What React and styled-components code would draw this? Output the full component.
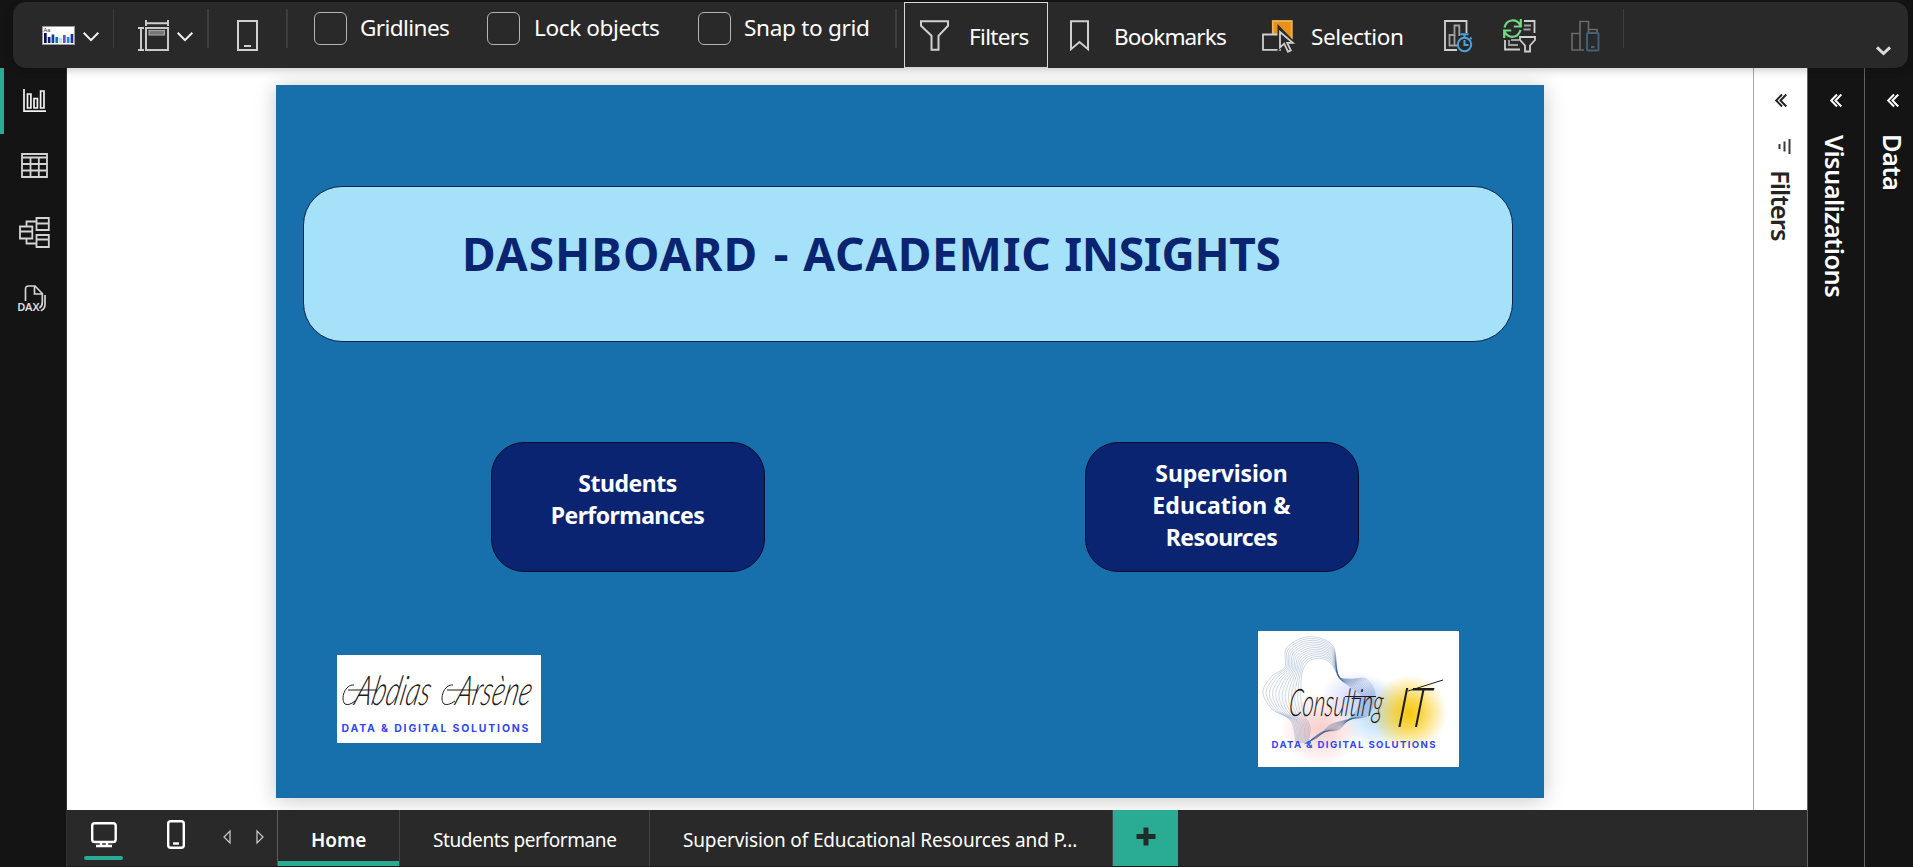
import React from 'react';
import styled, { createGlobalStyle } from 'styled-components';

const c = {
  bg: '#141414',
  bar: '#292929',
  teal: '#2aac94',
  line: '#d0d0d0',
  page: '#1770ac',
  navy: '#0a2472',
  sky: '#a6e1fa',
};

const Global = createGlobalStyle`
  * { box-sizing: border-box; }
  body { margin: 0; background: ${c.bg}; overflow: hidden; }
  svg { display: block; flex: none; overflow: visible; }
`;

const Shell = styled.div`
  display: flex;
  flex-direction: column;
  width: 1913px;
  height: 867px;
  background: ${c.bg};
  font-family: 'Noto Sans', 'Open Sans', sans-serif;
  color: #fff;
`;

/* ---------- ribbon ---------- */

const Ribbon = styled.header`
  display: flex;
  align-items: flex-start;
  flex: none;
  height: 66px;
  margin: 2px 5px 0 13px;
  background: ${c.bar};
  border-radius: 13px;
  box-shadow: 0 2px 9px rgba(0, 0, 0, 0.22);
  position: relative;
  z-index: 1;
`;

const Tool = styled.div`
  display: flex;
  flex: none;
  width: ${(p) => p.$w}px;
  margin: ${(p) => p.$top ?? 18}px 0 0 ${(p) => p.$gap}px;
`;

const Divider = styled.div`
  flex: none;
  width: ${(p) => p.$w ?? 2}px;
  height: 39px;
  margin: 7px 0 0 ${(p) => p.$gap}px;
  background: #3d3d3d;
`;

const Checkbox = styled.span`
  flex: none;
  width: 33px;
  height: 33px;
  margin: 10px 0 0 ${(p) => p.$gap}px;
  border: 1px solid #b4b4b4;
  border-radius: 6px;
`;

const ToolLabel = styled.span`
  flex: none;
  width: ${(p) => p.$w}px;
  margin: ${(p) => p.$top ?? 11}px 0 0 ${(p) => p.$gap}px;
  font-size: 22.6px;
  line-height: 30px;
  letter-spacing: ${(p) => p.$ls}px;
  white-space: nowrap;
`;

const ActiveTool = styled.div`
  display: flex;
  align-items: flex-start;
  flex: none;
  width: 144px;
  height: 66px;
  margin-left: 7px;
  border: 1px solid #d6d6d6;
`;

/* ---------- body ---------- */

const Body = styled.div`
  display: flex;
  flex: 1;
  min-height: 0;
`;

const Rail = styled.nav`
  flex: none;
  width: 67px;
  border-right: 1px solid #303030;
`;

const RailItem = styled.div`
  display: flex;
  align-items: center;
  height: ${(p) => p.$h ?? 66}px;
  padding-left: ${(p) => p.$left}px;
  padding-bottom: 1px;
  border-left: 4px solid ${(p) => (p.$active ? c.teal : 'transparent')};
`;

const Main = styled.main`
  display: flex;
  flex-direction: column;
  width: 1740px;
`;

const Workspace = styled.div`
  display: flex;
  height: 742px;
  background: #fff;
`;

const Canvas = styled.section`
  width: 1686px;
  padding: 17px 0 0 209px;
  overflow: hidden;
`;

const ReportPage = styled.div`
  width: 1268px;
  height: 713px;
  padding-top: 101px;
  background: ${c.page};
  box-shadow: 0 2px 20px rgba(0, 0, 0, 0.22);
`;

const TitleCard = styled.div`
  width: 1210px;
  height: 156px;
  margin-left: 27px;
  padding: 36px 0 0 158px;
  background: ${c.sky};
  border: 1px solid #0d2347;
  border-radius: 39px;
  color: ${c.navy};
  font-size: 46px;
  font-weight: 700;
  line-height: 60px;
  white-space: nowrap;
`;

const TitleWord = styled.span`
  margin-left: ${(p) => p.$gap ?? 0}px;
  letter-spacing: ${(p) => p.$ls}px;
`;

const NavRow = styled.div`
  display: flex;
  gap: 320px;
  margin: 100px 0 0 215px;
`;

const NavButton = styled.div`
  width: 274px;
  height: 130px;
  padding-top: ${(p) => p.$top}px;
  padding-right: 1px;
  background: ${c.navy};
  border: 1px solid #030c2c;
  border-radius: 33px;
  text-align: center;
  font-size: 23px;
  font-weight: 700;
  line-height: 32px;
`;

const NavLine = styled.div`
  letter-spacing: ${(p) => p.$ls}px;
`;

const LogoRow = styled.div`
  display: flex;
  align-items: center;
  gap: 717px;
  margin: 59px 0 0 61px;
`;

const LogoCard = styled.div`
  width: ${(p) => p.$w}px;
  height: ${(p) => p.$h}px;
  background: #fff;
`;

/* ---------- collapsed panes ---------- */

const Pane = styled.aside`
  display: flex;
  flex-direction: column;
  align-items: center;
  flex: none;
  width: ${(p) => p.$w}px;
  padding: 26px 0 0 ${(p) => p.$left ?? 0}px;
  border-left: 1px solid ${(p) => (p.$light ? '#a8a8a8' : '#626262')};
  background: ${(p) => (p.$light ? '#fff' : c.bg)};
  color: ${(p) => (p.$light ? '#252423' : '#fff')};
`;

const PaneGlyph = styled.div`
  margin: 32px 0 0 8px;
`;

const PaneName = styled.span`
  writing-mode: vertical-rl;
  margin-top: ${(p) => p.$top}px;
  margin-right: ${(p) => p.$right ?? 0}px;
  font-size: 25.5px;
  font-weight: 600;
  line-height: 36px;
  letter-spacing: ${(p) => p.$ls}px;
  white-space: nowrap;
`;

/* ---------- page tabs ---------- */

const TabBar = styled.footer`
  display: flex;
  height: 57px;
  background: ${c.bar};
  border-bottom: 1px solid #1a1a1a;
`;

const Layouts = styled.div`
  display: flex;
  align-items: flex-start;
  width: 211px;
  border-right: 1px solid #5a5a5a;
`;

const LayoutButton = styled.div`
  display: flex;
  flex-direction: column;
  align-items: center;
  width: ${(p) => p.$w}px;
  margin: ${(p) => p.$top}px 0 0 ${(p) => p.$gap}px;
`;

const Underline = styled.div`
  width: 39px;
  height: 4px;
  margin-top: 8px;
  border-radius: 2px;
  background: ${c.teal};
`;

const Tab = styled.div`
  width: ${(p) => p.$w}px;
  padding: 17px 0 0 33px;
  border-right: 1px solid #444;
  font-size: 19px;
  font-weight: ${(p) => (p.$active ? 600 : 400)};
  line-height: 26px;
  letter-spacing: ${(p) => p.$ls ?? 0}px;
  white-space: nowrap;
  box-shadow: ${(p) => (p.$active ? `inset 0 -5px 0 ${c.teal}` : 'none')};
`;

const AddTab = styled.div`
  display: flex;
  justify-content: center;
  width: 65px;
  padding-top: 17px;
  background: ${c.teal};
`;

/* ---------- icons ---------- */

const Chevron = () => (
  <svg width="16" height="10" fill="none" stroke="#f2f2f2" strokeWidth="2">
    <path d="M0.7 0.8 8 8.2 15.3 0.8" />
  </svg>
);

const themeBars = [
  ['#07144a', 10], ['#0a2472', 6], ['#123a9a', 8.5], ['#1770ac', 6], ['#a6e1fa', 5],
  ['#6b4fc4', 8], ['#1a86f0', 6], ['#1c2e9c', 9],
];

const ThemeIcon = () => (
  <svg width="33" height="19">
    <rect x="0.5" y="0.5" width="32" height="18" fill="#fff" stroke="#9a9a9a" />
    <text x="1.5" y="5.8" fontSize="5.5" fontFamily="Liberation Sans, sans-serif" fill="#333">Aa</text>
    {themeBars.map(([fill, h], i) => (
      <rect key={i} x={2 + i * 3.8} y={17 - h} width="2.7" height={h} fill={fill} />
    ))}
  </svg>
);

const PageViewIcon = () => (
  <svg width="31" height="31" fill="none" stroke={c.line} strokeWidth="1.9">
    <path d="M8 3.2h22M8 0v6M30 0v6M3 8v22M0 8h6M0 30h6" />
    <rect x="8" y="8" width="22" height="22" />
    <rect x="11" y="10.5" width="15.5" height="4.5" fill="#777" stroke="#a2a2a2" strokeWidth="1.2" />
  </svg>
);

const TabletIcon = () => (
  <svg width="21" height="31" fill="none" stroke={c.line} strokeWidth="2">
    <rect x="1" y="1" width="19" height="29" />
    <path d="M7 26h7" />
  </svg>
);

const FunnelIcon = () => (
  <svg width="29" height="31" fill="none" stroke={c.line} strokeWidth="2">
    <path d="M1 1.2h27v4.6l-9.5 10v14h-7v-14L1 5.8z" />
  </svg>
);

const BookmarkIcon = () => (
  <svg width="19" height="31" fill="none" stroke={c.line} strokeWidth="2">
    <path d="M1 1.2h17v28L9.5 22 1 29.2z" />
  </svg>
);

const SelectionIcon = () => (
  <svg width="32" height="33" fill="none" stroke={c.line} strokeWidth="1.8">
    <rect x="10.8" y="1" width="19" height="17.5" fill="#e8921c" stroke="#f0b35a" />
    <path d="M1 14.5h17v15.3H1z" fill={c.bar} />
    <path d="M16.5 6.5v23l5-4 3.5 6.5 4.5-2-3.5-6.5h7z" fill={c.bar} stroke={c.bar} strokeWidth="2" />
    <path d="M18 12v15.5l4.2-3.8 3.8 8 2.8-1.3-3.6-7.6h5.6z" />
  </svg>
);

const PerformanceIcon = () => (
  <svg width="29" height="33" fill="none" stroke={c.line} strokeWidth="1.8">
    <path d="M13 30H1V1h21.5v12" />
    <path d="M13 25.5H5.5V15h5V5.5h4.8V16" stroke="#a0a0a0" />
    <path d="M10.5 15v10.5" stroke="#a0a0a0" />
    <circle cx="20.5" cy="24.5" r="6.7" stroke="#4aa3df" strokeWidth="2" />
    <path d="M20.5 17.5v-3M16.5 14.3h8M20.5 20v5h4M26 17.5l1.6 1.6" stroke="#4aa3df" strokeWidth="2" />
  </svg>
);

const RefreshFilterIcon = () => (
  <svg width="33" height="33" fill="none" stroke={c.line} strokeWidth="1.8">
    <path d="M21 2h10.5v12M2 21v9.5h15" />
    <path d="M21 6.5h7M20.5 10.5h7M6 21v5h9M8 21h8" stroke="#a0a0a0" />
    <path d="M17 18h15v3l-5 5.5v6h-5v-6L17 21z" />
    <path d="M1.5 8.5C3.5 0 13.5-1 17.5 6.5M17.8 0v7.5h-7M17.5 11C15 19.5 5.5 20 1.5 12.5M1.2 19v-7.5h7" stroke="#74d884" strokeWidth="2.2" />
  </svg>
);

const MobileVisualIcon = () => (
  <svg width="29" height="33" fill="none" stroke="#686868" strokeWidth="1.7">
    <path d="M13 30H1V13.5h8V30M9 13.5V1.5h8.5V30M17.5 9.5h8.5v3" />
    <rect x="16" y="13" width="11.5" height="17.5" rx="1" fill={c.bar} stroke="#42617a" strokeWidth="1.9" />
    <path d="M20 27h3.5" stroke="#42617a" strokeWidth="2" />
  </svg>
);

const CollapseIcon = () => (
  <svg width="15" height="10" fill="none" stroke="#dcdcdc" strokeWidth="3">
    <path d="M1 1.3 7.5 7.5 14 1.3" />
  </svg>
);

const ReportIcon = () => (
  <svg width="23" height="23" fill="none" stroke="#f4f4f4" strokeWidth="1.7">
    <path d="M1 0v22.2h22M4.5 19V5h3.4v14zM11 19V9.5h3.4V19zM17.6 19V2H21v17z" />
  </svg>
);

const TableIcon = () => (
  <svg width="27" height="25" fill="none" stroke="#d4d4d4" strokeWidth="1.8">
    <path d="M1 1h25v23H1zM1 4.5h25M1 11h25M1 17.5h25M9.5 4.5V24M17.8 4.5V24" />
  </svg>
);

const ModelIcon = () => (
  <svg width="31" height="31" fill="none" stroke="#d4d4d4" strokeWidth="1.8">
    <path d="M17.5 1h12.3v12H17.5zM17.5 6.5h12.3M1 9.5h12.3v12H1zM1 14.5h12.3M17.5 18h12.3v12H17.5zM17.5 22.5h12.3" />
    <path d="M7.5 9.5V4.5h10M7.5 21.5v5h10" />
  </svg>
);

const DaxLabel = styled.text`
  font-size: 11px;
  font-weight: 600;
  fill: #dedede;
  stroke: none;
`;

const DaxIcon = () => (
  <svg width="28" height="27" fill="none" stroke="#d4d4d4" strokeWidth="1.7">
    <path d="M7.5 16V4q0-3 3-3h6.5l7.3 7.5v9q0 4-3 5.5M16.5 1v8h7.8M27 10v9q0 5-4.2 6.8" />
    <DaxLabel x="-0.8" y="26" textLength="22.5" lengthAdjust="spacingAndGlyphs">DAX</DaxLabel>
  </svg>
);

const DoubleChevron = () => (
  <svg width="12" height="13" fill="none" stroke="currentColor" strokeWidth="2">
    <path d="M7 0.5 1.2 6.5 7 12.5M11.3 0.5 5.5 6.5l5.8 6" />
  </svg>
);

const FilterLines = () => (
  <svg width="13" height="15" fill="none" stroke="#3b3a39" strokeWidth="2">
    <path d="M11.5 0v15M6.5 2.5v10M1.5 5v5" />
  </svg>
);

const MonitorIcon = () => (
  <svg width="26" height="26" fill="none" stroke="#fff" strokeWidth="2.4">
    <rect x="1.2" y="1.2" width="23.5" height="18.8" rx="2.5" />
    <path d="M10 20.5v4M16 20.5v4M5 24h16" />
  </svg>
);

const PhoneIcon = () => (
  <svg width="18" height="29" fill="none" stroke="#fff" strokeWidth="2.4">
    <rect x="1.2" y="1.2" width="15.6" height="26.6" rx="2.5" />
    <path d="M6 23.5h6" />
  </svg>
);

const Arrow = ({ d }) => (
  <svg width="8" height="14" fill="none" stroke="#c4c4c4" strokeWidth="1.3">
    <path d={d} />
  </svg>
);

const PlusIcon = () => (
  <svg width="20" height="20" stroke="#1f2c29" strokeWidth="5">
    <path d="M10 0.5v18M0.5 9.5h19" />
  </svg>
);

/* ---------- logos ---------- */

const Signature = styled.text`
  font-family: Lato, 'Open Sans', sans-serif;
  font-style: italic;
  font-weight: 300;
  fill: #1c1c1c;
`;

const Tagline = styled.text`
  font-family: Inter, Lato, sans-serif;
  font-weight: 700;
  fill: #3048ee;
`;

const SignatureLogo = () => (
  <svg width="204" height="88">
    <g transform="translate(0 47) skewX(-12)">
      <Signature x="17" y="3" fontSize="41" textLength="75" lengthAdjust="spacingAndGlyphs">Abdias</Signature>
      <Signature x="118" y="3" fontSize="41" textLength="75" lengthAdjust="spacingAndGlyphs">Arsène</Signature>
    </g>
    <g fill="none" stroke="#1c1c1c" strokeWidth="1">
      <path d="M17 30C8 29 3 44 8 49Q12 51 18 46M11 35H40" />
      <path d="M116 30C107 29 102 44 107 49Q111 51 118 46M110 35H140" />
    </g>
    <Tagline x="4.5" y="77" fontSize="10.5" textLength="187" lengthAdjust="spacing">DATA &amp; DIGITAL SOLUTIONS</Tagline>
  </svg>
);

/* The ribbon of threads runs between these two closed outlines. */
const outer = [[38, 112], [33, 90], [14, 78], [5, 61], [14, 45], [27, 36], [28, 18], [44, 7], [62, 7], [76, 17], [80, 44], [92, 48], [108, 48], [117, 63], [110, 84], [92, 88], [72, 94], [60, 106], [46, 113]];
const inner = [[50, 112], [52, 96], [46, 84], [43, 70], [43, 56], [44, 42], [48, 33], [55, 28], [66, 28], [74, 34], [82, 48], [90, 54], [95, 58], [104, 66], [98, 80], [88, 91], [80, 99], [64, 101], [50, 112]];

const wavePath = (t) => {
  const pts = outer.map(([x, y], i) => [x + (inner[i][0] - x) * t, y + (inner[i][1] - y) * t]);
  const at = (i) => pts[Math.max(0, Math.min(pts.length - 1, i))];
  let d = `M${pts[0]}`;
  for (let i = 0; i < pts.length - 1; i += 1) {
    const [p0, p1, p2, p3] = [at(i - 1), at(i), at(i + 1), at(i + 2)];
    d += `C${p1[0] + (p2[0] - p0[0]) / 6} ${p1[1] + (p2[1] - p0[1]) / 6} `
      + `${p2[0] - (p3[0] - p1[0]) / 6} ${p2[1] - (p3[1] - p1[1]) / 6} ${p2[0]} ${p2[1]}`;
  }
  return d;
};

const Glow = ({ id, color, opacity }) => (
  <radialGradient id={id}>
    <stop offset="0" stopColor={color} stopOpacity={opacity} />
    <stop offset="0.35" stopColor={color} stopOpacity={opacity * 0.75} />
    <stop offset="1" stopColor={color} stopOpacity="0" />
  </radialGradient>
);

const ConsultingLogo = () => (
  <svg width="202" height="136">
    <defs>
      <Glow id="yellow" color="#f8c90e" opacity={1} />
      <Glow id="blue" color="#8fc9f5" opacity={0.6} />
      <Glow id="violet" color="#a9b4fb" opacity={0.5} />
      <Glow id="pink" color="#f4a9a4" opacity={0.55} />
    </defs>
    <ellipse cx="63" cy="98" rx="40" ry="36" fill="url(#pink)" />
    <ellipse cx="98" cy="66" rx="36" ry="26" fill="url(#violet)" />
    <ellipse cx="119" cy="84" rx="38" ry="36" fill="url(#blue)" />
    <ellipse cx="151" cy="82" rx="38" ry="38" fill="url(#yellow)" />
    {Array.from({ length: 13 }, (_, i) => (
      <path key={i} d={wavePath(i / 12)} fill="none" stroke="#24508a" strokeOpacity="0.45" strokeWidth="0.5" />
    ))}
    <g transform="translate(0 85) skewX(-6)">
      <Signature x="30" y="0" fontSize="38" textLength="94" lengthAdjust="spacingAndGlyphs">Consulting</Signature>
      <Signature x="139" y="11" fontSize="55" textLength="33" lengthAdjust="spacingAndGlyphs">IT</Signature>
    </g>
    <path d="M87 65.5h31M150 60l35-11" fill="none" stroke="#1c1c1c" strokeWidth="1" />
    <Tagline x="13.5" y="117" fontSize="9.6" textLength="164" lengthAdjust="spacing">DATA &amp; DIGITAL SOLUTIONS</Tagline>
  </svg>
);

/* ---------- screen ---------- */

export default function App() {
  return (
    <Shell>
      <Global />
      <Ribbon>
        <Tool $gap={29} $w={33} $top={24}><ThemeIcon /></Tool>
        <Tool $gap={8} $w={16} $top={30}><Chevron /></Tool>
        <Divider $gap={14} $w={1} />
        <Tool $gap={24} $w={31}><PageViewIcon /></Tool>
        <Tool $gap={8} $w={16} $top={30}><Chevron /></Tool>
        <Divider $gap={14} />
        <Tool $gap={28} $w={21}><TabletIcon /></Tool>
        <Divider $gap={28} />
        <Checkbox $gap={26} />
        <ToolLabel $gap={13} $w={89} $ls={-0.6}>Gridlines</ToolLabel>
        <Checkbox $gap={38} />
        <ToolLabel $gap={14} $w={126} $ls={-0.4}>Lock objects</ToolLabel>
        <Checkbox $gap={38} />
        <ToolLabel $gap={13} $w={125} $ls={-0.32}>Snap to grid</ToolLabel>
        <Divider $gap={26} />
        <ActiveTool>
          <Tool $gap={15} $w={29} $top={17}><FunnelIcon /></Tool>
          <ToolLabel $gap={20} $w={61} $ls={-0.7} $top={19}>Filters</ToolLabel>
        </ActiveTool>
        <Tool $gap={22} $w={19}><BookmarkIcon /></Tool>
        <ToolLabel $gap={25} $w={113} $ls={-0.92} $top={20}>Bookmarks</ToolLabel>
        <Tool $gap={35} $w={32}><SelectionIcon /></Tool>
        <ToolLabel $gap={17} $w={93} $ls={-0.4} $top={20}>Selection</ToolLabel>
        <Tool $gap={40} $w={29}><PerformanceIcon /></Tool>
        <Tool $gap={30} $w={33} $top={17}><RefreshFilterIcon /></Tool>
        <Tool $gap={35} $w={29}><MobileVisualIcon /></Tool>
        <Divider $gap={23} $w={1} />
        <Tool $gap={252} $w={15} $top={44}><CollapseIcon /></Tool>
      </Ribbon>

      <Body>
        <Rail>
          <RailItem $active $left={19}><ReportIcon /></RailItem>
          <RailItem $left={17} $h={64}><TableIcon /></RailItem>
          <RailItem $left={15} $h={70}><ModelIcon /></RailItem>
          <RailItem $left={14} $h={62}><DaxIcon /></RailItem>
        </Rail>

        <Main>
          <Workspace>
            <Canvas>
              <ReportPage>
                <TitleCard>
                  <TitleWord $ls={1.05}>DASHBOARD </TitleWord>
                  <TitleWord $ls={0.77} $gap={2.4}>- </TitleWord>
                  <TitleWord $ls={0.7} $gap={1.4}>ACADEMIC </TitleWord>
                  <TitleWord $ls={-0.3}>INSIGHTS</TitleWord>
                </TitleCard>
                <NavRow>
                  <NavButton $top={24}>
                    <NavLine $ls={-0.47}>Students</NavLine>
                    <NavLine $ls={-0.55}>Performances</NavLine>
                  </NavButton>
                  <NavButton $top={14}>
                    <NavLine $ls={-0.15}>Supervision</NavLine>
                    <NavLine $ls={0.08}>Education &amp;</NavLine>
                    <NavLine $ls={-0.6}>Resources</NavLine>
                  </NavButton>
                </NavRow>
                <LogoRow>
                  <LogoCard $w={204} $h={88}><SignatureLogo /></LogoCard>
                  <LogoCard $w={201} $h={136}><ConsultingLogo /></LogoCard>
                </LogoRow>
              </ReportPage>
            </Canvas>
            <Pane $light $w={54}>
              <DoubleChevron />
              <PaneGlyph><FilterLines /></PaneGlyph>
              <PaneName $top={16} $ls={-0.92}>Filters</PaneName>
            </Pane>
          </Workspace>
          <TabBar>
            <Layouts>
              <LayoutButton $gap={17} $top={12} $w={39}>
                <MonitorIcon />
                <Underline />
              </LayoutButton>
              <LayoutButton $gap={44} $top={10} $w={18}><PhoneIcon /></LayoutButton>
              <LayoutButton $gap={38} $top={20} $w={8}><Arrow d="M7 1v12L1 7z" /></LayoutButton>
              <LayoutButton $gap={25} $top={20} $w={8}><Arrow d="M1 1v12l6-6z" /></LayoutButton>
            </Layouts>
            <Tab $active $w={122}>Home</Tab>
            <Tab $w={250} $ls={-0.4}>Students performane</Tab>
            <Tab $w={463} $ls={-0.15}>Supervision of Educational Resources and P...</Tab>
            <AddTab><PlusIcon /></AddTab>
          </TabBar>
        </Main>

        <Pane $w={57}>
          <DoubleChevron />
          <PaneName $top={28} $right={2} $ls={-0.63}>Visualizations</PaneName>
        </Pane>
        <Pane $w={49} $left={8}>
          <DoubleChevron />
          <PaneName $top={27} $ls={-0.66}>Data</PaneName>
        </Pane>
      </Body>
    </Shell>
  );
}
